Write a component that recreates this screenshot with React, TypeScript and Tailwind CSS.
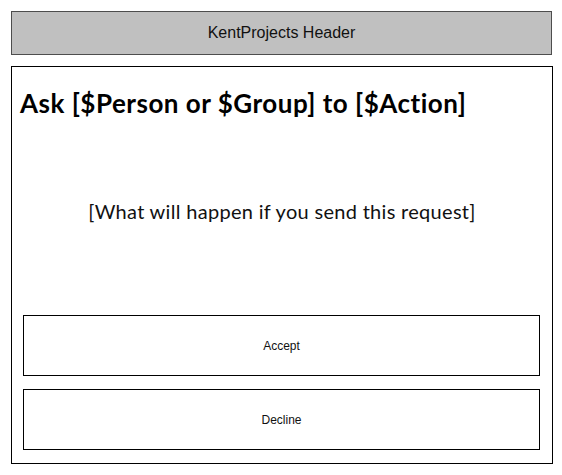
import React from 'react';

const actions = ['Accept', 'Decline'];

export default function App() {
  return (
    <div className="w-[562px] h-[475px] bg-white pt-[11px] pl-[11px]">
      {/* Header bar */}
      <div className="w-[541px] h-[44px] bg-[#c0c0c0] border border-[#4d4d4d] flex items-center justify-center">
        <span className="text-[16px] text-[#111] font-['Liberation_Sans',sans-serif]">KentProjects Header</span>
      </div>

      {/* Request panel */}
      <div className="mt-[11px] w-[542px] h-[398px] border border-black flex flex-col px-[11px] pb-[13px]">
        <h1 className="mt-[19px] -ml-[3px] text-[26px] leading-[34px] tracking-[0.5px] font-bold text-black font-['Lato',sans-serif]">
          Ask [$Person or $Group] to [$Action]
        </h1>
        <p className="mt-[78px] text-center text-[20px] leading-[26px] tracking-[0.3px] text-[#111] font-['Lato',sans-serif]">
          [What will happen if you send this request]
        </p>
        <div className="mt-auto flex flex-col gap-[13px]">
          {actions.map((label) => (
            <button
              key={label}
              className="h-[61px] w-[517px] border border-black bg-white flex items-center justify-center text-[12px] text-[#111] font-['Liberation_Sans',sans-serif]"
            >
              {label}
            </button>
          ))}
        </div>
      </div>
    </div>
  );
}
